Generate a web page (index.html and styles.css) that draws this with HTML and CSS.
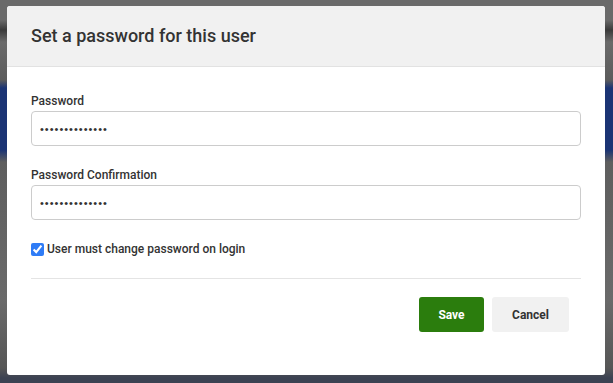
FILE: index.html
```html
<!DOCTYPE html>
<html lang="en">
<head>
    <meta charset="UTF-8">
    <meta name="viewport" content="width=device-width, initial-scale=1.0">
    <title>Set Password</title>
    <link rel="stylesheet" href="styles.css">
</head>
<body>
    <div class="modal">
        <div class="modal-header">
            <h2>Set a password for this user</h2>
        </div>
        <form class="modal-body">
            <div class="field">
                <label for="password">Password</label>
                <input type="password" id="password" name="password" value="aaaaaaaaaaaaaa">
            </div>
            <div class="field">
                <label for="password_confirmation">Password Confirmation</label>
                <input type="password" id="password_confirmation" name="password_confirmation" value="aaaaaaaaaaaaaa">
            </div>
            <label class="check">
                <input type="checkbox" name="must_change" checked>
                <span>User must change password on login</span>
            </label>
            <div class="modal-actions">
                <button type="submit" class="btn btn-save">Save</button>
                <button type="button" class="btn btn-cancel">Cancel</button>
            </div>
        </form>
    </div>
</body>
</html>
```

FILE: styles.css
```css
* {
    margin: 0;
    padding: 0;
    box-sizing: border-box;
}
body {
    font-family: Roboto, 'Liberation Sans', sans-serif;
    color: #333;
    height: 383px;
    overflow: hidden;
    padding: 6px 0 0 7px;
    background: linear-gradient(to bottom,
        #6a6a6a 0, #6a6a6a 20px, #3a3a3a 30px, #6a6a6a 42px,
        #5c5c5c 80px, #1b3474 88px, #1b3474 150px, #5e5e5e 162px,
        #6a6a6a 300px, #565656 368px, #3c4252 378px, #3c4252 383px);
}
.modal {
    width: 598px;
    height: 369px;
    background-color: #fff;
    border-radius: 3px;
    overflow: hidden;
}
.modal-header {
    background-color: #f1f1f1;
    border-bottom: 1px solid #e2e2e2;
    height: 61px;
    padding: 0 24px;
    display: flex;
    align-items: center;
}
.modal-header h2 {
    font-size: 18px;
    font-weight: 500;
    color: #333;
    padding-bottom: 2px;
}
.modal-body {
    padding: 26px 24px 0;
    display: flex;
    flex-direction: column;
}
.field {
    display: flex;
    flex-direction: column;
    gap: 2px;
    margin-bottom: 21px;
}
.field label {
    font-size: 12px;
    font-weight: 500;
    line-height: 16px;
    color: #333;
}
.field input {
    height: 35px;
    border: 1px solid #ccc;
    border-radius: 4px;
    padding: 0 8px;
    font-size: 11px;
    color: #333;
    letter-spacing: 1px;
}
.check {
    display: flex;
    align-items: center;
    gap: 3px;
    font-size: 12px;
    font-weight: 500;
    line-height: 16px;
}
.check input {
    width: 13px;
    height: 13px;
    margin: 0;
    accent-color: #2f7cf6;
}
.modal-actions {
    margin-top: 21px;
    border-top: 1px solid #e4e4e4;
    padding: 18px 12px 0 0;
    display: flex;
    justify-content: flex-end;
    gap: 8px;
}
.btn {
    height: 35px;
    border: none;
    border-radius: 3px;
    font-family: Roboto, 'Liberation Sans', sans-serif;
    font-size: 12px;
    font-weight: 700;
    cursor: pointer;
}
.btn-save {
    width: 65px;
    background-color: #2b7d0d;
    color: #fff;
}
.btn-cancel {
    width: 77px;
    background-color: #f1f1f1;
    color: #333;
}
```
